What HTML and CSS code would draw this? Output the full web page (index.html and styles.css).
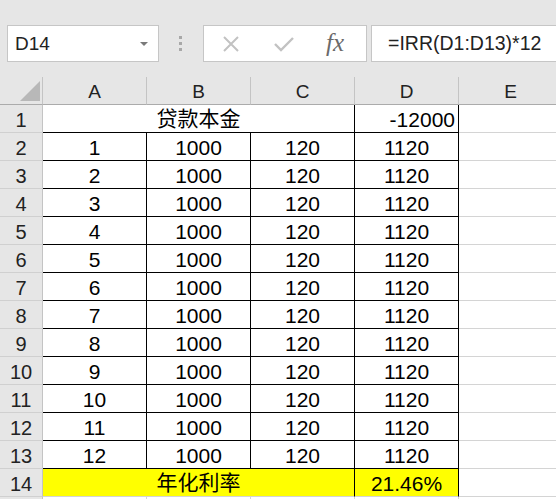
FILE: index.html
```html
<!DOCTYPE html>
<html lang="zh-CN">
<head>
<meta charset="utf-8">
<title>IRR</title>
<link rel="stylesheet" href="styles.css">
</head>
<body>
<div class="toolbar">
  <div class="namebox"><span>D14</span><i class="caret"></i></div>
  <div class="dots"><i></i><i></i><i></i></div>
  <div class="actions">
    <svg class="ic-x" width="18" height="16" viewBox="0 0 18 16"><path d="M2 1 L16 15 M16 1 L2 15" stroke="#c2c2c2" stroke-width="2" fill="none"/></svg>
    <svg class="ic-ok" width="22" height="16" viewBox="0 0 22 16"><path d="M2 8 L8 14 L20 2" stroke="#c2c2c2" stroke-width="2.4" fill="none"/></svg>
    <span class="fx">fx</span>
  </div>
  <div class="formula">=IRR(D1:D13)*12</div>
</div>
<div class="sheet">
  <div class="corner"><svg width="20" height="20" viewBox="0 0 20 20"><polygon points="20,0 20,20 0,20" fill="#b8b8b8"/></svg></div>
  <div class="ch">A</div><div class="ch">B</div><div class="ch">C</div><div class="ch">D</div><div class="ch">E</div>

  <div class="rh">1</div><div class="c b merge3">贷款本金</div><div class="c b num">-12000</div><div class="c"></div>
  <div class="rh">2</div><div class="c b">1</div><div class="c b">1000</div><div class="c b">120</div><div class="c b">1120</div><div class="c"></div>
  <div class="rh">3</div><div class="c b">2</div><div class="c b">1000</div><div class="c b">120</div><div class="c b">1120</div><div class="c"></div>
  <div class="rh">4</div><div class="c b">3</div><div class="c b">1000</div><div class="c b">120</div><div class="c b">1120</div><div class="c"></div>
  <div class="rh">5</div><div class="c b">4</div><div class="c b">1000</div><div class="c b">120</div><div class="c b">1120</div><div class="c"></div>
  <div class="rh">6</div><div class="c b">5</div><div class="c b">1000</div><div class="c b">120</div><div class="c b">1120</div><div class="c"></div>
  <div class="rh">7</div><div class="c b">6</div><div class="c b">1000</div><div class="c b">120</div><div class="c b">1120</div><div class="c"></div>
  <div class="rh">8</div><div class="c b">7</div><div class="c b">1000</div><div class="c b">120</div><div class="c b">1120</div><div class="c"></div>
  <div class="rh">9</div><div class="c b">8</div><div class="c b">1000</div><div class="c b">120</div><div class="c b">1120</div><div class="c"></div>
  <div class="rh">10</div><div class="c b">9</div><div class="c b">1000</div><div class="c b">120</div><div class="c b">1120</div><div class="c"></div>
  <div class="rh">11</div><div class="c b">10</div><div class="c b">1000</div><div class="c b">120</div><div class="c b">1120</div><div class="c"></div>
  <div class="rh">12</div><div class="c b">11</div><div class="c b">1000</div><div class="c b">120</div><div class="c b">1120</div><div class="c"></div>
  <div class="rh">13</div><div class="c b">12</div><div class="c b">1000</div><div class="c b">120</div><div class="c b">1120</div><div class="c"></div>
  <div class="rh">14</div><div class="c br yel merge3">年化利率</div><div class="c br yel">21.46%</div><div class="c"></div>

  <div class="rh"></div><div class="c"></div><div class="c"></div><div class="c"></div><div class="c"></div><div class="c"></div>
</div>
</body>
</html>
```

FILE: styles.css
```css
* { box-sizing: border-box; }
html, body { margin: 0; padding: 0; }
body {
  width: 556px;
  height: 499px;
  overflow: hidden;
  background: #ffffff;
  font-family: "Liberation Sans", "Noto Sans CJK SC", sans-serif;
  color: #000;
}
.toolbar {
  height: 77px;
  background: #e6e6e6;
  display: flex;
  align-items: flex-start;
  padding-top: 25px;
  padding-left: 7px;
}
.namebox {
  width: 152px;
  height: 37px;
  background: #fff;
  border: 1px solid #c6c6c6;
  display: flex;
  align-items: center;
  justify-content: space-between;
  padding: 0 10px 0 7px;
  font-size: 19px;
  color: #222;
}
.caret {
  width: 0; height: 0;
  border-left: 4px solid transparent;
  border-right: 4px solid transparent;
  border-top: 4px solid #7a7a7a;
  margin-top: 1px;
}
.dots {
  margin-left: 20px;
  height: 37px;
  display: flex;
  flex-direction: column;
  justify-content: center;
  gap: 3px;
}
.dots i { display: block; width: 3px; height: 3px; background: #a8a8a8; }
.actions {
  margin-left: 21px;
  width: 164px;
  height: 37px;
  background: #fff;
  border: 1px solid #c6c6c6;
  display: flex;
  align-items: center;
  padding-left: 18px;
}
.ic-ok { margin-left: 33px; }
.fx {
  margin-left: 31px;
  font-family: "Liberation Serif", serif;
  font-style: italic;
  font-size: 25px;
  line-height: 1;
  color: #6a6a6a;
  margin-top: -3px;
}
.formula {
  margin-left: 4px;
  flex: 1;
  height: 37px;
  background: #fff;
  border: 1px solid #c6c6c6;
  border-right: none;
  display: flex;
  align-items: center;
  padding-left: 16px;
  font-size: 19.5px;
  color: #222;
  white-space: nowrap;
}
.sheet {
  height: 422px;
  overflow: hidden;
  display: grid;
  grid-template-columns: 43px repeat(5, 104px);
  grid-auto-rows: 28px;
}
.corner {
  background: #e6e6e6;
  border-right: 1px solid #c4c4c4;
  border-bottom: 1px solid #ababab;
  display: flex;
  justify-content: flex-end;
  align-items: flex-end;
  padding: 0 2px 3px 0;
}
.ch {
  background: #e6e6e6;
  border-right: 1px solid #c4c4c4;
  border-bottom: 1px solid #ababab;
  display: flex;
  justify-content: center;
  align-items: flex-end;
  padding-bottom: 1px;
  font-size: 19px;
  color: #222;
}
.rh {
  background: #e6e6e6;
  border-right: 1px solid #c4c4c4;
  border-bottom: 1px solid #d0d0d0;
  display: flex;
  justify-content: center;
  align-items: flex-end;
  font-size: 20px;
  color: #222;
}
.c {
  border-right: 1px solid #d4d4d4;
  border-bottom: 1px solid #d4d4d4;
  display: flex;
  justify-content: center;
  align-items: flex-end;
  font-size: 21px;
  white-space: nowrap;
}
.c.b { border-right-color: #000; border-bottom-color: #000; }
.c.br { border-right-color: #000; }
.merge3 { grid-column: span 3; }
.num { justify-content: flex-end; padding-right: 3px; }
.yel { background: #ffff00; }
```
